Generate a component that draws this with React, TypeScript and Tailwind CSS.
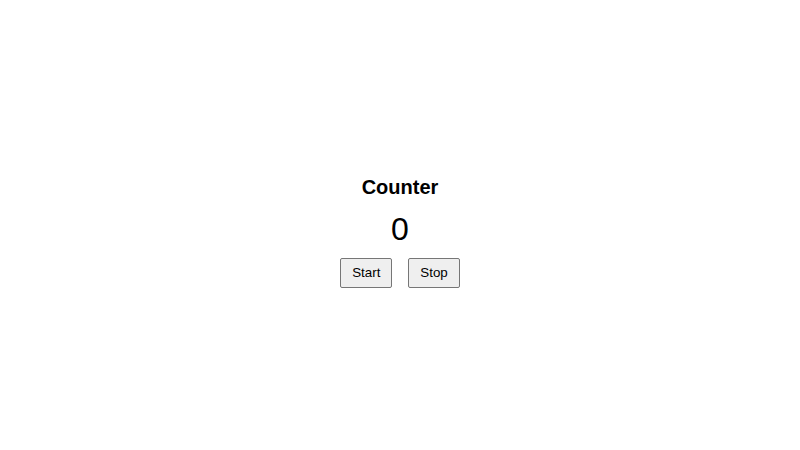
import React, { useEffect, useRef, useState } from 'react';

export default function App() {
  const [count, setCount] = useState(0);
  const timer = useRef<number | null>(null);

  const start = () => {
    if (timer.current !== null) return;
    timer.current = window.setInterval(() => setCount((c) => c + 1), 1000);
  };

  const stop = () => {
    if (timer.current === null) return;
    window.clearInterval(timer.current);
    timer.current = null;
  };

  useEffect(() => stop, []);

  return (
    <div className="h-[450px] w-full bg-white pt-[14px] flex flex-col items-center justify-center font-['Liberation_Sans',Arial,sans-serif] text-black">
      <h2 className="text-[20px] leading-[23px] font-bold">Counter</h2>
      <div className="mt-[12px] text-[32px] leading-[37px]">{count}</div>
      <div className="mt-[10px] flex gap-4">
        <button
          onClick={start}
          className="px-[11px] py-[5px] text-[13.33px] leading-[18px] bg-[#efefef] border border-[#767676] rounded-[2px]"
        >
          Start
        </button>
        <button
          onClick={stop}
          className="px-[11px] py-[5px] text-[13.33px] leading-[18px] bg-[#efefef] border border-[#767676] rounded-[2px]"
        >
          Stop
        </button>
      </div>
    </div>
  );
}
